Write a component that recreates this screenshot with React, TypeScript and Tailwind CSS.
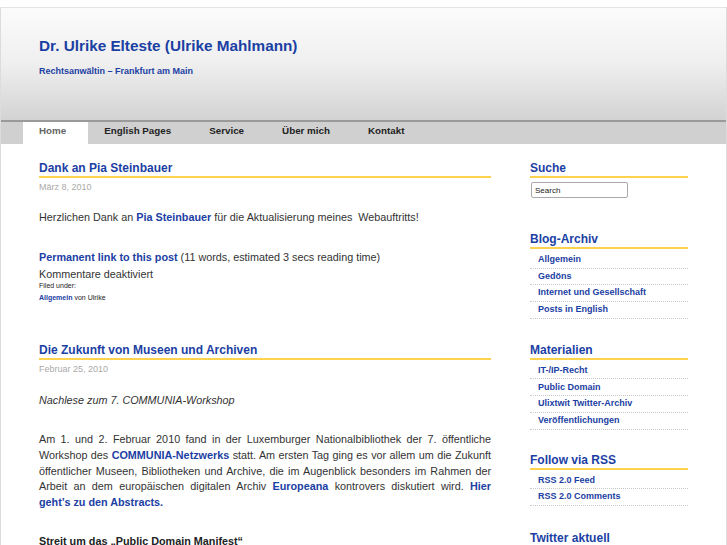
import React from 'react'

const blue = 'text-[#1b40a3]'

const navItems = ['Home', 'English Pages', 'Service', 'Über mich', 'Kontakt']

function Widget({ title, items, className = '' }: { title: string; items?: string[]; className?: string }) {
  return (
    <div className={className}>
      <h3 className={`text-[12px] leading-[14px] font-bold ${blue} border-b-2 border-[#ffd24d] pb-[1px]`}>{title}</h3>
      {items && (
        <ul className="mt-[3px]">
          {items.map((it) => (
            <li key={it} className="border-b border-dotted border-[#c8c8c8] pl-[8px] h-[16.7px] flex items-center">
              <a className={`text-[9px] font-bold ${blue}`}>{it}</a>
            </li>
          ))}
        </ul>
      )}
    </div>
  )
}

export default function App() {
  return (
    <div className="bg-white min-h-[545px] pt-[7px] font-['Liberation_Sans',Arial,sans-serif] text-[#333] overflow-hidden">
      <div className="w-[727px] border-x border-[#dcdcdc]">
        {/* header */}
        <div className="h-[113px] border-t border-[#e4e4e4] bg-gradient-to-b from-[#fbfbfb] via-[#efefef] to-[#d3d3d3] pl-[38px] pt-[29px]">
          <h1 className={`text-[15.3px] leading-[18px] font-bold ${blue}`}>Dr. Ulrike Elteste (Ulrike Mahlmann)</h1>
          <p className={`mt-[11px] text-[9px] leading-[11px] font-bold ${blue}`}>Rechtsanwältin – Frankfurt am Main</p>
        </div>
        {/* nav */}
        <div className="border-t-2 border-[#9a9a9a] bg-[#d0d0d0] h-[24px] pl-[22px] flex">
          {navItems.map((n, i) => (
            <div
              key={n}
              className={`pl-[16px] pr-[22px] pt-[3px] text-[9.8px] leading-[12px] font-bold ${i === 0 ? 'bg-white text-[#666]' : 'text-[#222]'}`}
            >
              {n}
            </div>
          ))}
        </div>
        {/* content */}
        <div className="flex pt-[17px] pb-10">
          <div className="ml-[38px] w-[452px]">
            <h2 className={`text-[12px] leading-[14px] font-bold ${blue} border-b-2 border-[#ffd24d] pb-[1px]`}>Dank an Pia Steinbauer</h2>
            <p className="mt-[4px] text-[9px] leading-[11px] text-[#aaa]">März 8, 2010</p>
            <p className="mt-[16px] text-[10.8px] leading-[16px]">
              Herzlichen Dank an <a className={`font-bold ${blue}`}>Pia Steinbauer</a> für die Aktualisierung meines&nbsp; Webauftritts!
            </p>
            <p className="mt-[24px] text-[10.8px] leading-[16px]">
              <a className={`font-bold ${blue}`}>Permanent link to this post</a> (11 words, estimated 3 secs reading time)
            </p>
            <p className="mt-[1px] text-[10.8px] leading-[16px]">Kommentare deaktiviert</p>
            <p className="-mt-[1px] text-[7px] leading-[10px] text-[#222]">Filed under:</p>
            <p className="mt-[2px] text-[7px] leading-[10px] text-[#222]">
              <a className={`font-bold ${blue}`}>Allgemein</a> von Ulrike
            </p>

            <h2 className={`mt-[40px] text-[12px] leading-[14px] font-bold ${blue} border-b-2 border-[#ffd24d] pb-[1px]`}>
              Die Zukunft von Museen und Archiven
            </h2>
            <p className="mt-[4px] text-[9px] leading-[11px] text-[#aaa]">Februar 25, 2010</p>
            <p className="mt-[17px] text-[10.8px] leading-[16px] italic">Nachlese zum 7. COMMUNIA-Workshop</p>
            <p className="mt-[24px] text-[10.8px] leading-[15.75px] text-justify">
              Am 1. und 2. Februar 2010 fand in der Luxemburger Nationalbibliothek der 7. öffentliche Workshop des{' '}
              <a className={`font-bold ${blue}`}>COMMUNIA-Netzwerks</a> statt. Am ersten Tag ging es vor allem um die Zukunft
              öffentlicher Museen, Bibliotheken und Archive, die im Augenblick besonders im Rahmen der Arbeit an dem europäischen
              digitalen Archiv <a className={`font-bold ${blue}`}>Europeana</a> kontrovers diskutiert wird.{' '}
              <a className={`font-bold ${blue}`}>Hier geht’s zu den Abstracts.</a>
            </p>
            <p className="mt-[22px] text-[10.8px] leading-[16px] font-bold text-[#222]">Streit um das „Public Domain Manifest“</p>
          </div>

          <div className="ml-[39px] w-[158px]">
            <Widget title="Suche" />
            <input
              className="block mt-[4px] ml-[1px] w-[97px] h-[16px] border border-[#aaa] rounded-[2px] px-[3px] text-[8px] text-[#222] bg-white outline-none"
              defaultValue="Search"
            />
            <Widget
              className="mt-[34px]"
              title="Blog-Archiv"
              items={['Allgemein', 'Gedöns', 'Internet und Gesellschaft', 'Posts in English']}
            />
            <Widget
              className="mt-[24px]"
              title="Materialien"
              items={['IT-/IP-Recht', 'Public Domain', 'Ulixtwit Twitter-Archiv', 'Veröffentlichungen']}
            />
            <Widget className="mt-[23px]" title="Follow via RSS" items={['RSS 2.0 Feed', 'RSS 2.0 Comments']} />
            <Widget className="mt-[25px]" title="Twitter aktuell" />
          </div>
        </div>
      </div>
    </div>
  )
}
